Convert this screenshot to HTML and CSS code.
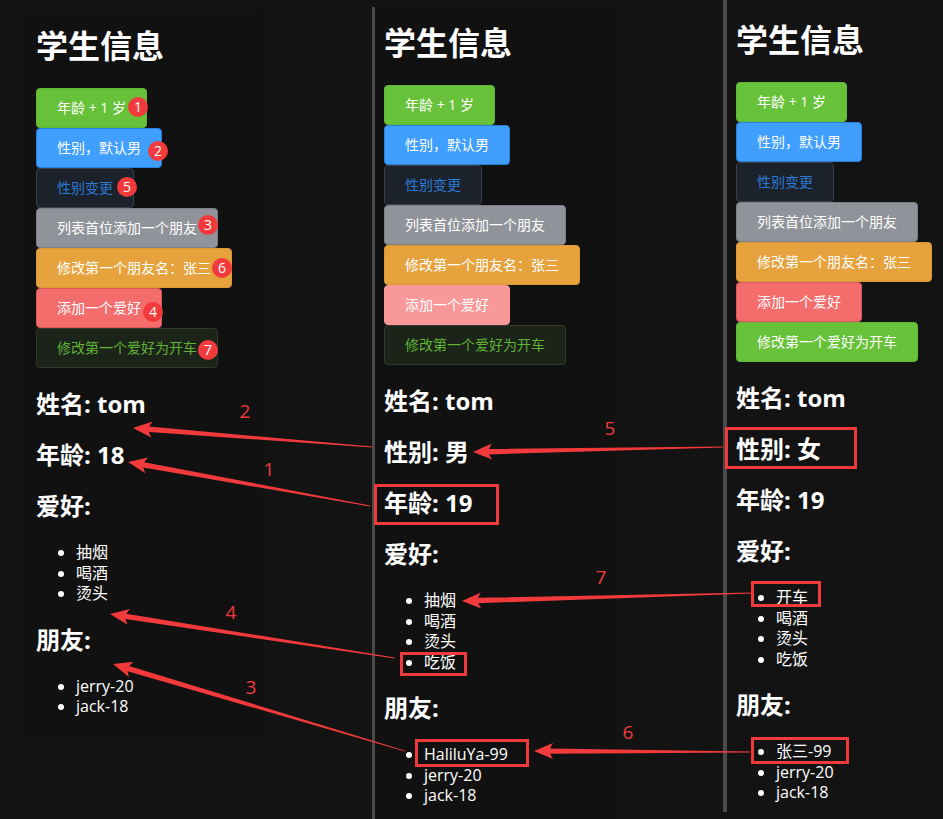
FILE: index.html
```html
<!DOCTYPE html>
<html lang="zh-CN">
<head>
<meta charset="utf-8">
<title>学生信息</title>
<link rel="stylesheet" href="styles.css">
</head>
<body>
<div class="page">
  <div class="col col-1">
    <div class="card card-1">
      <h1 class="title">学生信息</h1>
      <div class="btns">
        <button class="btn btn-success">年龄 + 1 岁</button>
        <button class="btn btn-primary">性别，默认男</button>
        <button class="btn btn-dark-primary">性别变更</button>
        <button class="btn btn-info">列表首位添加一个朋友</button>
        <button class="btn btn-warning">修改第一个朋友名：张三</button>
        <button class="btn btn-danger">添加一个爱好</button>
        <button class="btn btn-dark-success">修改第一个爱好为开车</button>
      </div>
      <h2 class="field">姓名: tom</h2>
      <h2 class="field">年龄: 18</h2>
      <h2 class="field">爱好:</h2>
      <ul class="list">
        <li>抽烟</li>
        <li>喝酒</li>
        <li>烫头</li>
      </ul>
      <h2 class="field">朋友:</h2>
      <ul class="list">
        <li>jerry-20</li>
        <li>jack-18</li>
      </ul>
    </div>
  </div>
  <div class="sep sep-1"></div>
  <div class="col col-2">
    <div class="card card-2">
      <h1 class="title">学生信息</h1>
      <div class="btns">
        <button class="btn btn-success">年龄 + 1 岁</button>
        <button class="btn btn-primary">性别，默认男</button>
        <button class="btn btn-dark-primary">性别变更</button>
        <button class="btn btn-info">列表首位添加一个朋友</button>
        <button class="btn btn-warning">修改第一个朋友名：张三</button>
        <button class="btn btn-danger-light">添加一个爱好</button>
        <button class="btn btn-dark-success">修改第一个爱好为开车</button>
      </div>
      <h2 class="field">姓名: tom</h2>
      <h2 class="field">性别: 男</h2>
      <h2 class="field">年龄: 19</h2>
      <h2 class="field">爱好:</h2>
      <ul class="list">
        <li>抽烟</li>
        <li>喝酒</li>
        <li>烫头</li>
        <li>吃饭</li>
      </ul>
      <h2 class="field">朋友:</h2>
      <ul class="list">
        <li>HaliluYa-99</li>
        <li>jerry-20</li>
        <li>jack-18</li>
      </ul>
    </div>
  </div>
  <div class="sep sep-2"></div>
  <div class="col col-3">
    <div class="card card-3">
      <h1 class="title">学生信息</h1>
      <div class="btns">
        <button class="btn btn-success">年龄 + 1 岁</button>
        <button class="btn btn-primary">性别，默认男</button>
        <button class="btn btn-dark-primary">性别变更</button>
        <button class="btn btn-info">列表首位添加一个朋友</button>
        <button class="btn btn-warning">修改第一个朋友名：张三</button>
        <button class="btn btn-danger">添加一个爱好</button>
        <button class="btn btn-success">修改第一个爱好为开车</button>
      </div>
      <h2 class="field">姓名: tom</h2>
      <h2 class="field">性别: 女</h2>
      <h2 class="field">年龄: 19</h2>
      <h2 class="field">爱好:</h2>
      <ul class="list">
        <li>开车</li>
        <li>喝酒</li>
        <li>烫头</li>
        <li>吃饭</li>
      </ul>
      <h2 class="field">朋友:</h2>
      <ul class="list">
        <li>张三-99</li>
        <li>jerry-20</li>
        <li>jack-18</li>
      </ul>
    </div>
  </div>
</div>

<svg class="notes" width="943" height="819" viewBox="0 0 943 819" xmlns="http://www.w3.org/2000/svg">
  <g class="badges">
    <circle cx="138" cy="107" r="10"/><text x="138" y="112">1</text>
    <circle cx="158" cy="151" r="10"/><text x="158" y="156">2</text>
    <circle cx="127" cy="187" r="10"/><text x="127" y="192">5</text>
    <circle cx="208" cy="225" r="10"/><text x="208" y="230">3</text>
    <circle cx="222" cy="268" r="10"/><text x="222" y="273">6</text>
    <circle cx="153" cy="312" r="10"/><text x="153" y="317">4</text>
    <circle cx="208" cy="350" r="10"/><text x="208" y="355">7</text>
  </g>
  <g class="boxes">
    <rect x="375.5" y="485.5" width="122" height="38"/>
    <rect x="401.5" y="653.5" width="64" height="21"/>
    <rect x="416.5" y="740.5" width="111" height="25"/>
    <rect x="726.5" y="428.5" width="129" height="39"/>
    <rect x="752.5" y="582.5" width="67" height="23"/>
    <rect x="752.5" y="738.5" width="95" height="24"/>
  </g>
  <g class="arrows">
    <polygon transform="translate(128 462) rotate(10.3)" points="0,0 19,-8 16,-2.7 246,-0.5 246,0.5 16,2.7 19,8"/>
    <polygon transform="translate(133 428) rotate(4.55)" points="0,0 19,-8 16,-2.7 240,-0.5 240,0.5 16,2.7 19,8"/>
    <polygon transform="translate(113 664) rotate(16.6)" points="0,0 19,-8 16,-2.7 305,-0.5 305,0.5 16,2.7 19,8"/>
    <polygon transform="translate(110 614) rotate(8.8)" points="0,0 19,-8 16,-2.7 288,-0.5 288,0.5 16,2.7 19,8"/>
    <polygon transform="translate(473 452) rotate(-1.15)" points="0,0 19,-8 16,-2.7 250,-0.5 250,0.5 16,2.7 19,8"/>
    <polygon transform="translate(534 751) rotate(0.27)" points="0,0 19,-8 16,-2.7 216,-0.5 216,0.5 16,2.7 19,8"/>
    <polygon transform="translate(462 601) rotate(-1.6)" points="0,0 19,-8 16,-2.7 290,-0.5 290,0.5 16,2.7 19,8"/>
  </g>
  <g class="labels">
    <text x="245" y="418">2</text>
    <text x="269" y="476">1</text>
    <text x="231" y="619">4</text>
    <text x="251" y="694">3</text>
    <text x="610" y="435">5</text>
    <text x="601" y="584">7</text>
    <text x="628" y="739">6</text>
  </g>
</svg>
</body>
</html>
```

FILE: styles.css
```css
* { box-sizing: border-box; }

html, body {
  margin: 0;
  padding: 0;
}

body {
  position: relative;
  width: 943px;
  height: 819px;
  overflow: hidden;
  background: #131313;
  color: #ffffff;
  font-family: "Open Sans", "Noto Sans CJK SC", sans-serif;
}

.page {
  display: flex;
  align-items: stretch;
  height: 819px;
}

.col {
  flex: none;
}

.col-1 { width: 372px; }
.col-2 { width: 348px; }
.col-3 { flex: 1; }

.sep {
  flex: none;
  background: #4a4a4a;
}

.sep-1 {
  width: 3px;
  margin-top: 7px;
}

.sep-2 {
  width: 4px;
  margin-bottom: 7px;
}

.card {
  background: #111111;
}

.card-1 {
  margin: 10px 0 0 28px;
  width: 234px;
  height: 727px;
  padding: 16px 0 0 8px;
}

.card-2 {
  margin-top: 7px;
  width: 241px;
  height: 812px;
  padding: 16px 0 0 9px;
}

.card-3 {
  background: transparent;
  padding: 20px 0 0 9px;
}

.title {
  margin: 0 0 22px 0;
  font-size: 32px;
  line-height: 40px;
  font-weight: 700;
}

.btns {
  display: flex;
  flex-direction: column;
  align-items: flex-start;
}

.btn {
  display: inline-flex;
  align-items: center;
  height: 40px;
  padding: 0 20px;
  border: 1px solid transparent;
  border-radius: 4px;
  font-family: "Open Sans", "Noto Sans CJK SC", sans-serif;
  font-size: 14px;
  line-height: 1;
  color: #ffffff;
  white-space: nowrap;
}

.btn-success { background: #67c23a; border-color: #62b837; }
.btn-primary { background: #409eff; border-color: #2a7fd9; }
.btn-dark-primary { background: #1c222b; border-color: #3a3f48; color: #2b7bd4; }
.btn-info { background: #909399; border-color: #7d8086; }
.btn-warning { background: #e6a23c; border-color: #d99736; }
.btn-danger { background: #f56c6c; border-color: #d9585b; }
.btn-danger-light { background: #f89898; border-color: #f89898; }
.btn-dark-success { background: #1c2419; border-color: #323a2f; color: #5eb334; }

.field {
  margin: 21px 0 21px 0;
  font-size: 24px;
  line-height: 30px;
  font-weight: 700;
}

.list {
  margin: 21px 0;
  padding-left: 40px;
  font-size: 16px;
  line-height: 20.5px;
}

.notes {
  position: absolute;
  top: 0;
  left: 0;
  pointer-events: none;
}

.badges circle { fill: #f23a3c; }
.badges text {
  fill: #ffffff;
  font-family: "Open Sans", sans-serif;
  font-size: 14px;
  text-anchor: middle;
}

.boxes rect {
  fill: none;
  stroke: #f03a3c;
  stroke-width: 3;
}

.arrows polygon { fill: #f23a3c; }

.labels text {
  fill: #f23a3c;
  font-family: "Open Sans", sans-serif;
  font-size: 19px;
  text-anchor: middle;
}
```
